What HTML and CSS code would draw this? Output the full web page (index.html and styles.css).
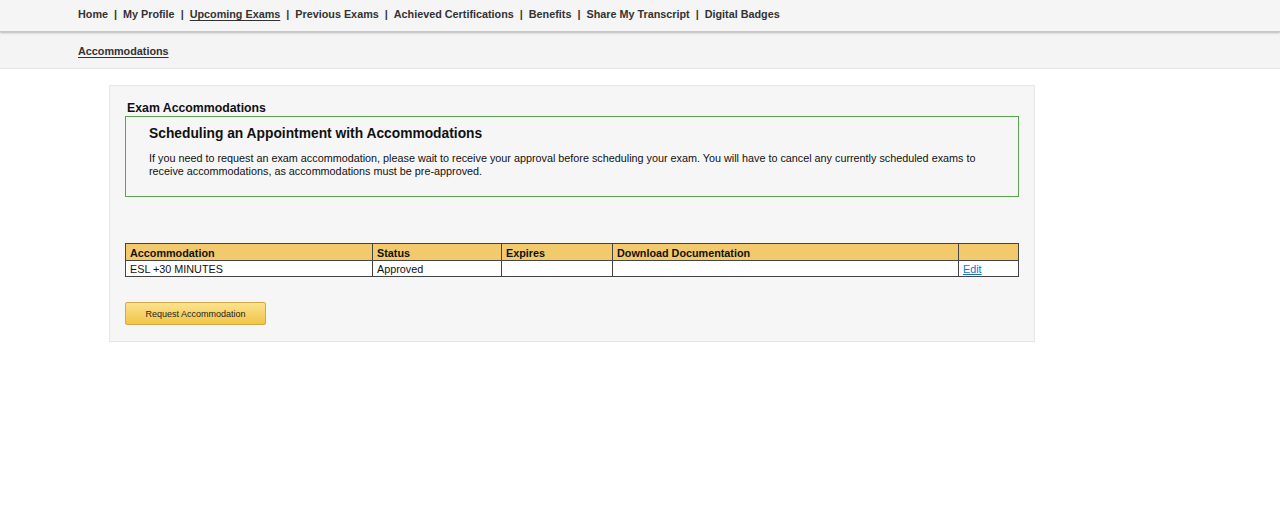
FILE: index.html
```html
<!DOCTYPE html>
<html>
<head>
<meta charset="utf-8">
<link rel="stylesheet" href="styles.css">
</head>
<body>
<div class="topnav">
  <div class="nav-inner">
    <a class="nav-link" href="#">Home</a><span class="sep">|</span>
    <a class="nav-link" href="#">My Profile</a><span class="sep">|</span>
    <a class="nav-link active" href="#">Upcoming Exams</a><span class="sep">|</span>
    <a class="nav-link" href="#">Previous Exams</a><span class="sep">|</span>
    <a class="nav-link" href="#">Achieved Certifications</a><span class="sep">|</span>
    <a class="nav-link" href="#">Benefits</a><span class="sep">|</span>
    <a class="nav-link" href="#">Share My Transcript</a><span class="sep">|</span>
    <a class="nav-link" href="#">Digital Badges</a>
  </div>
</div>
<div class="subnav">
  <a class="nav-link active" href="#">Accommodations</a>
</div>
<div class="panel">
  <h2 class="panel-title">Exam Accommodations</h2>
  <div class="notice">
    <h3 class="notice-title">Scheduling an Appointment with Accommodations</h3>
    <p class="notice-text">If you need to request an exam accommodation, please wait to receive your approval before scheduling your exam. You will have to cancel any currently scheduled exams to receive accommodations, as accommodations must be pre-approved.</p>
  </div>
  <table class="acc-table">
    <thead>
      <tr>
        <th class="c1">Accommodation</th>
        <th class="c2">Status</th>
        <th class="c3">Expires</th>
        <th class="c4">Download Documentation</th>
        <th class="c5"></th>
      </tr>
    </thead>
    <tbody>
      <tr>
        <td>ESL +30 MINUTES</td>
        <td>Approved</td>
        <td></td>
        <td></td>
        <td><a class="edit" href="#">Edit</a></td>
      </tr>
    </tbody>
  </table>
  <button class="btn">Request Accommodation</button>
</div>
</body>
</html>
```
FILE: styles.css
```css
body {
  margin: 0;
  font-family: "Liberation Sans", Arial, sans-serif;
  color: #111;
  background: #fff;
}
.topnav {
  background: #f5f5f5;
  height: 32px;
  box-shadow: 0 1px 2px rgba(0,0,0,0.25);
  position: relative;
  z-index: 1;
  border-bottom: 1px solid #c8c8c8;
  box-sizing: border-box;
}
.nav-inner {
  padding-left: 78px;
  padding-top: 8px;
  font-size: 10.8px;
  font-weight: bold;
  color: #333;
  display: flex;
  align-items: center;
  line-height: 13px;
}
.nav-link {
  color: #333;
  text-decoration: none;
  font-weight: bold;
  font-size: 10.8px;
}
.nav-link.active {
  text-decoration: underline;
  text-underline-offset: 2px;
}
.sep {
  margin: 0 6px;
}
.subnav {
  background: #f4f4f4;
  height: 37px;
  box-sizing: border-box;
  border-bottom: 1px solid #e6e6e6;
  padding-left: 78px;
  display: flex;
  align-items: center;
  padding-top: 1px;
}
.panel {
  margin: 16px 0 0 109px;
  width: 926px;
  box-sizing: border-box;
  background: #f6f6f6;
  border: 1px solid #e6e6e6;
  padding: 15px 15px 16px 15px;
}
.panel-title {
  margin: 0 0 0 2px;
  font-size: 12.3px;
  font-weight: bold;
  line-height: 15px;
}
.notice {
  border: 1px solid #5ba34e;
  height: 81px;
  box-sizing: border-box;
  padding: 9px 20px 0 23px;
}
.notice-title {
  margin: 0;
  font-size: 13.8px;
  font-weight: bold;
  line-height: 16px;
}
.notice-text {
  margin: 10px 0 0 0;
  font-size: 10.8px;
  line-height: 12.5px;
}
.acc-table {
  margin-top: 46px;
  width: 894px;
  border-collapse: collapse;
  font-size: 10.8px;
  background: #fff;
}
.acc-table th, .acc-table td {
  border: 1px solid #444;
  text-align: left;
  padding: 1px 4px 0 4px;
  height: 16px;
  line-height: 14px;
  box-sizing: border-box;
}
.acc-table th {
  background: #f2ca6c;
  font-weight: bold;
  height: 17px;
}
.c1 { width: 247px; }
.c2 { width: 129px; }
.c3 { width: 111px; }
.c4 { width: 346px; }
.edit {
  color: #1c6fc7;
  text-decoration: underline;
}
.btn {
  display: block;
  margin-top: 25px;
  width: 141px;
  height: 23px;
  background: linear-gradient(#fbe28e, #f1c546);
  border: 1px solid #d2a94b;
  border-radius: 2px;
  font-family: "Liberation Sans", Arial, sans-serif;
  font-size: 9px;
  color: #222;
  padding: 0;
}
```
